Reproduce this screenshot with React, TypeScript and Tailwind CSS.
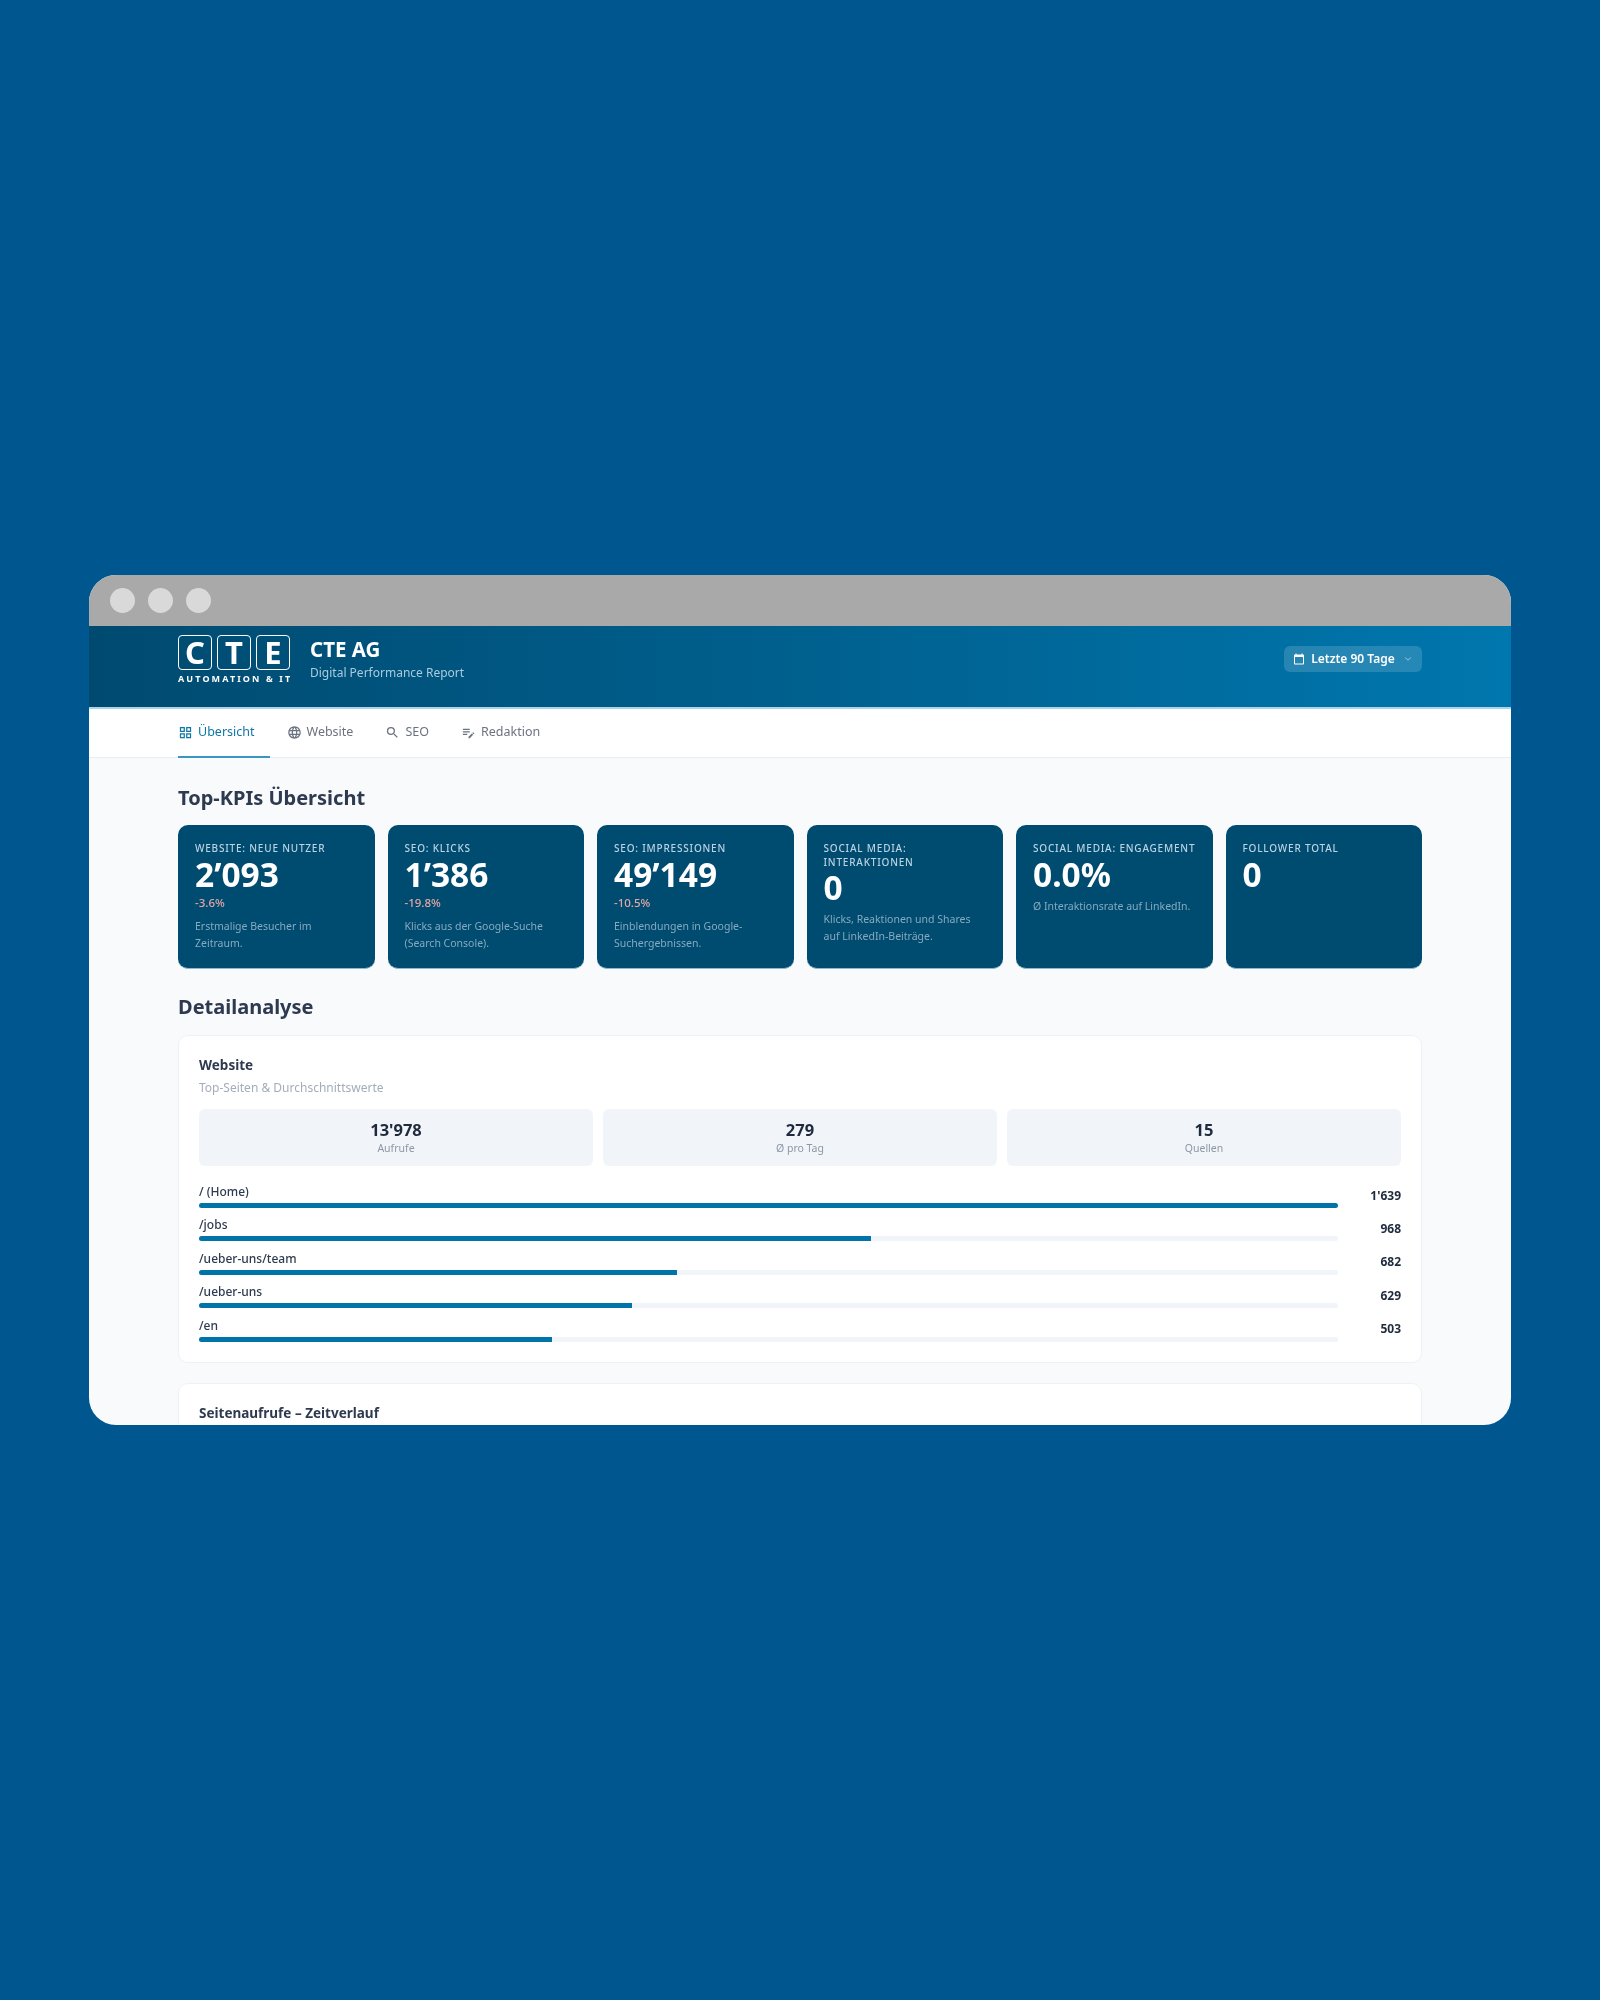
import { ChevronDown } from 'lucide-react';
import { MdCalendarToday, MdEditNote, MdLanguage, MdOutlineGridView, MdSearch } from 'react-icons/md';

const tabs = [
  { icon: MdOutlineGridView, label: 'Übersicht', active: true },
  { icon: MdLanguage, label: 'Website', active: false },
  { icon: MdSearch, label: 'SEO', active: false },
  { icon: MdEditNote, label: 'Redaktion', active: false },
];

const kpis = [
  { label: 'Website: Neue Nutzer', value: '2’093', delta: '-3.6%', text: 'Erstmalige Besucher im Zeitraum.' },
  { label: 'SEO: Klicks', value: '1’386', delta: '-19.8%', text: 'Klicks aus der Google-Suche (Search Console).' },
  { label: 'SEO: Impressionen', value: '49’149', delta: '-10.5%', text: 'Einblendungen in Google-Suchergebnissen.' },
  { label: 'Social Media: Interaktionen', value: '0', text: 'Klicks, Reaktionen und Shares auf LinkedIn-Beiträge.' },
  { label: 'Social Media: Engagement', value: '0.0%', text: 'Ø Interaktionsrate auf LinkedIn.' },
  { label: 'Follower Total', value: '0' },
];

const stats = [
  { value: "13'978", label: 'Aufrufe' },
  { value: '279', label: 'Ø pro Tag' },
  { value: '15', label: 'Quellen' },
];

const pages = [
  { path: '/ (Home)', width: 100, display: "1'639" },
  { path: '/jobs', width: 59, display: '968' },
  { path: '/ueber-uns/team', width: 42, display: '682' },
  { path: '/ueber-uns', width: 38, display: '629' },
  { path: '/en', width: 31, display: '503' },
];

function Logo() {
  return (
    <div className="w-[112px] shrink-0 text-white">
      <div className="flex justify-between">
        {['C', 'T', 'E'].map((letter) => (
          <span
            key={letter}
            className="flex h-[35px] w-[34px] items-center justify-center rounded-[4px] border-[1.5px] border-white text-[31px] font-bold leading-none"
          >
            {letter}
          </span>
        ))}
      </div>
      <div className="mt-[3px] whitespace-nowrap text-[9px] font-bold leading-[12px] tracking-[0.235em]">AUTOMATION &amp; IT</div>
    </div>
  );
}

export default function App() {
  return (
    <div className="min-h-[2000px] bg-[#00568f] px-[89px] pt-[575px] font-['Noto_Sans',sans-serif]">
      <div className="h-[850px] overflow-hidden rounded-[27px] bg-[#f8fafc] blur-[0.4px]">
        {/* Browser bar */}
        <div className="flex h-[51px] items-center gap-[13px] bg-[#a9a9a9] pl-[21px]">
          <span className="h-[25px] w-[25px] rounded-full bg-[#d9d9d9]" />
          <span className="h-[25px] w-[25px] rounded-full bg-[#d9d9d9]" />
          <span className="h-[25px] w-[25px] rounded-full bg-[#d9d9d9]" />
        </div>

        {/* Header */}
        <header className="flex h-[83px] items-start justify-between border-b-2 border-[#a9d4ea] bg-gradient-to-r from-[#004a70] to-[#0077ae] px-[89px] pt-[9px]">
          <div className="flex items-start gap-5">
            <Logo />
            <div>
              <h1 className="text-[20.5px] font-bold leading-[28px] text-white">CTE AG</h1>
              <p className="text-[12px] leading-[19px] text-[#a8cbdf]">Digital Performance Report</p>
            </div>
          </div>
          <button className="mt-[11px] flex h-[26px] w-[138px] items-center justify-center gap-[6px] rounded-[6px] bg-white/15 text-[12px] font-semibold text-white">
            <MdCalendarToday size={12} />
            Letzte 90 Tage
            <ChevronDown size={10} className="ml-[2px] text-[#b9d8e8]" />
          </button>
        </header>

        {/* Tabs */}
        <nav className="flex h-[49px] gap-[17px] border-b border-[#e8edf2] bg-white pl-[89px]">
          {tabs.map((tab) => {
            const Icon = tab.icon;
            return (
              <div
                key={tab.label}
                className={`-mb-px flex items-center gap-[5px] border-b-2 pr-[15px] text-[12.5px] ${
                  tab.active ? 'border-[#3b95c4] text-[#0f76a8]' : 'border-transparent text-[#6b7280]'
                }`}
              >
                <Icon size={15} />
                {tab.label}
              </div>
            );
          })}
        </nav>

        {/* Content */}
        <main className="px-[89px] pt-[26px]">
          <h2 className="text-[20px] font-bold leading-[27px] text-[#2d3a4f]">Top-KPIs Übersicht</h2>

          <div className="mt-[14px] grid grid-cols-6 gap-[13px]">
            {kpis.map((kpi) => (
              <div key={kpi.label} className="h-[144px] rounded-[10px] border-b border-[#8fb8cf] bg-[#004b70] px-[17px] pt-[17px]">
                <div className="text-[10px] font-medium uppercase leading-[13.5px] tracking-[0.08em] text-[#b9d3e2]">{kpi.label}</div>
                <div className="text-[33.5px] font-bold leading-[36px] text-white">{kpi.value}</div>
                {kpi.delta && <div className="mb-[7px] mt-[3px] text-[11.5px] font-medium leading-4 text-[#e6a5a5]">{kpi.delta}</div>}
                {kpi.text && <p className="mt-[6px] text-[10.5px] leading-[17px] text-[#86aabf]">{kpi.text}</p>}
              </div>
            ))}
          </div>

          <h2 className="mt-[24px] text-[20px] font-bold leading-[28px] text-[#2d3a4f]">Detailanalyse</h2>

          <section className="mt-[14px] rounded-[10px] border border-[#eef1f5] bg-white px-5 pb-5 pt-[19px]">
            <h3 className="text-[13.5px] font-bold leading-5 text-[#2d3a4f]">Website</h3>
            <p className="mt-1 text-[12px] leading-[18px] text-[#a3adba]">Top-Seiten &amp; Durchschnittswerte</p>

            <div className="mt-[12px] grid grid-cols-3 gap-[10px]">
              {stats.map((stat) => (
                <div key={stat.label} className="h-[57px] rounded-[6px] bg-[#f1f5f9] pt-[10px] text-center">
                  <div className="text-[16.5px] font-bold leading-[22px] text-[#1f2a3d]">{stat.value}</div>
                  <div className="text-[10.5px] leading-[14px] text-[#8d97a5]">{stat.label}</div>
                </div>
              ))}
            </div>

            <div className="mt-[17px] flex flex-col gap-[8.4px]">
              {pages.map((page) => (
                <div key={page.path} className="flex items-center">
                  <div className="w-[1139px]">
                    <div className="text-[12px] font-medium leading-[18px] text-[#2d3a4f]">{page.path}</div>
                    <div className="mt-[2px] h-[5px] overflow-hidden rounded-full bg-[#f1f5f9]">
                      <div className="h-full bg-[#0073a8]" style={{ width: `${page.width}%` }} />
                    </div>
                  </div>
                  <div className="flex-1 text-right text-[12px] font-bold text-[#1f2a3d]">{page.display}</div>
                </div>
              ))}
            </div>
          </section>

          <section className="mt-[20px] rounded-[10px] border border-[#eef1f5] bg-white px-5 pb-10 pt-[19px]">
            <h3 className="text-[13.5px] font-bold leading-5 text-[#2d3a4f]">Seitenaufrufe – Zeitverlauf</h3>
          </section>
        </main>
      </div>
    </div>
  );
}
